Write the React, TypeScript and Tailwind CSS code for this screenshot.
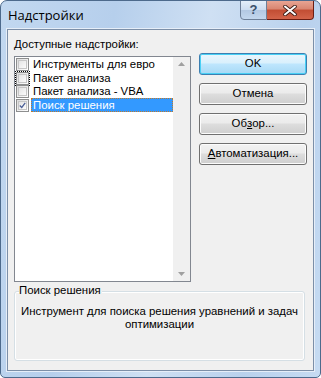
import React from 'react'

const items = [
  { label: 'Инструменты для евро', checked: false },
  { label: 'Пакет анализа', checked: false },
  { label: 'Пакет анализа - VBA', checked: false },
  { label: 'Поиск решения', checked: true },
]

function CheckBox({ checked }: { checked: boolean }) {
  return (
    <span className="flex h-[13px] w-[13px] shrink-0 items-center justify-center border border-[#8e8f8f] bg-[linear-gradient(135deg,#dcdcdc,#ffffff)]">
      <span className="flex h-[9px] w-[9px] items-center justify-center border border-[#c6c6c6] bg-[linear-gradient(135deg,#e4e4e4,#fbfbfb)]">
        {checked && (
          <svg width="9" height="9" viewBox="0 0 9 9">
            <path d="M1 4.5 L3.5 7 L8 1" stroke="#4a5f97" strokeWidth="1.6" fill="none" />
          </svg>
        )}
      </span>
    </span>
  )
}

function Btn({ children, primary }: { children: React.ReactNode; primary?: boolean }) {
  return (
    <button
      className={
        primary
          ? 'flex h-[22px] w-[108px] items-center justify-center rounded-[3px] border border-[#3c7fb1] bg-[linear-gradient(#eaf6fd_0%,#d9f0fc_45%,#bee6fd_50%,#a7d9f5_100%)] text-[11.4px] text-black shadow-[inset_0_0_0_1px_#48d0f5]'
          : 'flex h-[22px] w-[108px] items-center justify-center rounded-[3px] border border-[#707070] bg-[linear-gradient(#f2f2f2_0%,#ebebeb_45%,#dddddd_50%,#cfcfcf_100%)] text-[11.4px] text-black shadow-[inset_0_0_0_1px_#fcfcfc]'
      }
    >
      {children}
    </button>
  )
}

export default function App() {
  return (
    <div
      className="h-[378px] w-[321px] overflow-hidden rounded-t-[7px] rounded-b-[5px] border border-[#4d6a8c] bg-[linear-gradient(100deg,#c2d8f0_0%,#b6cfec_30%,#cfe0f3_55%,#b9d1ed_80%,#c6dbf2_100%)] text-black"
      style={{ fontFamily: '"Liberation Sans", Tahoma, sans-serif' }}
    >
      <div className="relative flex h-[28px] items-center pl-[7px]">
        <span className="text-[13px] leading-none text-black" style={{ fontFamily: '"Open Sans", "Noto Sans", sans-serif' }}>
          Надстройки
        </span>
        <div className="absolute right-[6px] top-[-1px] flex">
          <div className="flex h-[20px] w-[27px] items-center justify-center rounded-bl-[4px] border border-[#6d7f98] bg-[linear-gradient(#e4eef9_0%,#ccdcf0_50%,#b3c8e2_51%,#c3d7ee_100%)] text-[13px] font-bold text-[#3b4f6b]">
            ?
          </div>
          <div className="flex h-[20px] w-[47px] items-center justify-center rounded-br-[4px] border border-l-0 border-[#6b1d12] bg-[linear-gradient(#e8a493_0%,#d98570_45%,#c24d33_50%,#d3644a_100%)]">
            <svg width="14" height="11" viewBox="0 0 14 11">
              <path d="M2 1.5 L12 9.5 M12 1.5 L2 9.5" stroke="#3a1a14" strokeWidth="3.6" strokeLinecap="round" />
              <path d="M2 1.5 L12 9.5 M12 1.5 L2 9.5" stroke="#ffffff" strokeWidth="2" strokeLinecap="round" />
            </svg>
          </div>
        </div>
      </div>

      <div className="mx-[6px] h-[342px] border border-[#7c8fa8] bg-[#f0f0f0] shadow-[0_0_0_1px_#e6eef8]">
        <div className="flex gap-[8px] pl-[6px]">
          <div className="flex flex-col">
            <div className="pt-[8px] text-[11.4px] leading-[13px]">
              <span className="underline">Д</span>оступные надстройки:
            </div>
            <div className="mt-[5px] flex h-[226px] w-[177px] border border-[#828790] bg-white">
              <div className="flex flex-1 flex-col pt-[1px]">
                {items.map((it, i) => (
                  <div key={i} className="flex h-[13.5px] items-center gap-[2px] pl-[1px]">
                    <span className={i === 1 ? 'outline outline-1 outline-dotted outline-black' : ''}>
                      <CheckBox checked={it.checked} />
                    </span>
                    <span
                      className={
                        it.checked
                          ? 'flex h-[14px] flex-1 items-center border border-dotted border-[#c07a2a] bg-[#3399ff] pl-[1px] text-[11.4px] text-white'
                          : 'flex h-[14px] flex-1 items-center pl-[2px] text-[11.4px]'
                      }
                    >
                      {it.label}
                    </span>
                  </div>
                ))}
              </div>
              <div className="flex w-[17px] flex-col items-center justify-between bg-[#f0f0f0] py-[5px]">
                <svg width="7" height="4" viewBox="0 0 7 4">
                  <path d="M0 4 L3.5 0 L7 4 Z" fill="#a0a0a0" />
                </svg>
                <svg width="7" height="4" viewBox="0 0 7 4">
                  <path d="M0 0 L3.5 4 L7 0 Z" fill="#a0a0a0" />
                </svg>
              </div>
            </div>
          </div>
          <div className="flex flex-col gap-[8px] pt-[23px]">
            <Btn primary>OK</Btn>
            <Btn>Отмена</Btn>
            <Btn>
              Об<span className="underline">з</span>ор...
            </Btn>
            <Btn>
              <span className="underline">А</span>втоматизация...
            </Btn>
          </div>
        </div>

        <div className="relative ml-[6px] mt-[9px] h-[70px] w-[291px] rounded-[3px] border border-[#d5dfe5] shadow-[inset_0_0_0_1px_#ffffff]">
          <span className="absolute left-[4px] top-[-8px] bg-[#f0f0f0] pr-[1px] text-[11.4px] leading-[13px]">
            Поиск решения
          </span>
          <div className="pt-[13px] text-center text-[11.4px] leading-[13px]">
            Инструмент для поиска решения уравнений и задач
            <br />
            оптимизации
          </div>
        </div>
      </div>
    </div>
  )
}
